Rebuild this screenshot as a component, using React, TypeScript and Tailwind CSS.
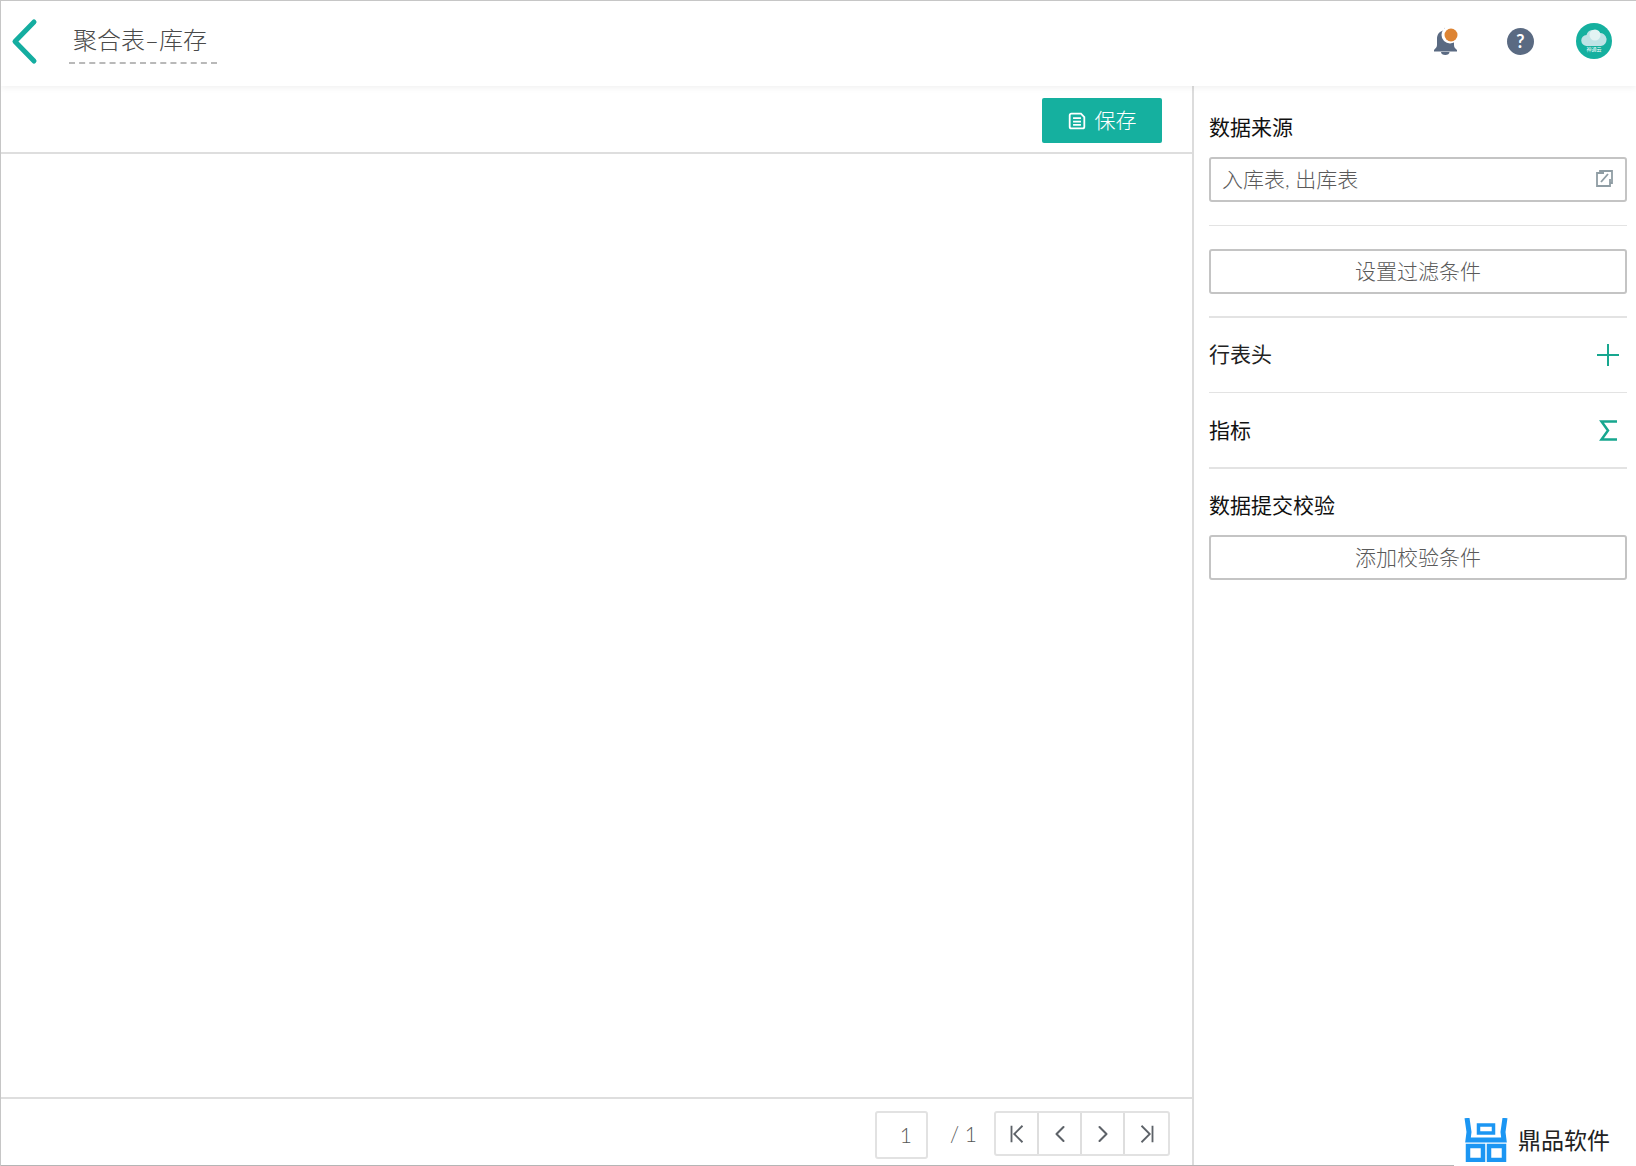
import { ChevronLeft, ChevronRight } from "lucide-react";

const font = "font-['Lato','Noto_Sans_CJK_SC',sans-serif]";

const Bell = () => (
  <svg viewBox="0 0 26 28" className="w-[26px] h-[28px]">
    <path d="M11 0.500 L12 3 C6.500 4 4 7 4 12 L4 18 C4 20 2.500 21.500 1 23 L1 24.500 L24 24.500 L24 23 C22 21.500 21 20 21 18 L21 14 L11 2z" fill="#5a6a82" />
    <path d="M8 25h8.500c0 1.800-1.800 3-4.200 3S8 26.800 8 25z" fill="#5a6a82" />
    <circle cx="17" cy="8" r="8.500" fill="white" />
    <circle cx="18" cy="8" r="6.500" fill="#dd8433" />
  </svg>
);

const Avatar = () => (
  <div className="w-[36px] h-[36px] rounded-full bg-[#15b09f] flex flex-col items-center pt-[5px]">
    <svg viewBox="0 0 26 18" className="w-[26px] h-[18px]">
      <path d="M6 18a5.500 5.500 0 0 1-.5-11A7 7 0 0 1 18 5a6.500 6.500 0 0 1 2 13z" fill="#bfe3e6" />
      <circle cx="14" cy="7" r="5.500" fill="#e2f3f3" />
    </svg>
    <span className="text-[5px] leading-[7px] text-white">神通云</span>
  </div>
);

const Logo = () => (
  <svg viewBox="0 0 44 44" className="w-[44px] h-[44px]" fill="none" stroke="#1b96f3">
    <path d="M3 0l2 14-1 8h36l-1-8 2-14" strokeWidth="5" />
    <rect x="14.500" y="7" width="15" height="8" strokeWidth="3.500" />
    <rect x="4" y="28" width="15" height="14" strokeWidth="4.500" />
    <rect x="25" y="28" width="15" height="14" strokeWidth="4.500" />
  </svg>
);

const PagerButton = ({ children, last }: { children: React.ReactNode; last?: boolean }) => (
  <button className={`w-[44px] h-full flex items-center justify-center text-[#5d6268] ${last ? "" : "border-r-2 border-[#dedede]"}`}>
    {children}
  </button>
);

export default function App() {
  return (
    <div className={`${font} w-[1636px] h-[1166px] relative bg-white border-t border-l border-[#c6c6c6] flex flex-col overflow-hidden`}>
      {/* header */}
      <header className="h-[85px] shrink-0 flex items-center shadow-[0_2px_6px_rgba(0,0,0,0.06)] z-10 bg-white">
        <svg viewBox="0 0 30 48" className="ml-[8px] w-[30px] h-[48px] -mt-[4px]" fill="none" stroke="#14ada0" strokeWidth="5" strokeLinecap="round" strokeLinejoin="round">
          <path d="M25 4L6 23.500 25 43" />
        </svg>
        <div className="ml-[30px] w-[148px] h-[44px] -mt-[4px] pl-[4px] pb-[2px] border-b-2 border-dashed border-[#b9b9b9] flex items-center text-[24px] font-light text-[#4a4a4a]">
          聚合表–库存
        </div>
        <div className="ml-auto flex items-center pb-[5px]">
          <Bell />
          <div className="ml-[48px] w-[27px] h-[27px] rounded-full bg-[#5a6a82] flex items-center justify-center text-white text-[18px] font-bold">?</div>
          <div className="ml-[42px] mr-[24px]"><Avatar /></div>
        </div>
      </header>

      <div className="flex-1 flex min-h-0">
        {/* main panel */}
        <main className="w-[1193px] flex flex-col border-r-2 border-[#dcdcdc]">
          <div className="h-[68px] shrink-0 flex items-start justify-end pt-[12px] pr-[30px] border-b-2 border-[#dedede]">
            <button className="w-[120px] h-[45px] rounded-[2px] bg-[#15b09f] text-white flex items-center justify-center gap-[9px] pb-[2px] text-[21px] font-light">
              <svg viewBox="0 0 16 16" className="w-[18px] h-[18px] mt-[2px]" fill="none" stroke="white" strokeWidth="1.600">
                <path d="M3 1.500h8.500l3 3V13a1.500 1.500 0 0 1-1.500 1.500H3A1.500 1.500 0 0 1 1.500 13V3A1.500 1.500 0 0 1 3 1.500z" />
                <path d="M4.500 5.500h7M4.500 8.500h7M4.500 11.500h7" />
              </svg>
              保存
            </button>
          </div>
          <div className="flex-1" />
          <div className="h-[68px] shrink-0 border-t-2 border-[#dedede] flex items-start justify-end pt-[12px] pr-[22px] text-[#555]">
            <div className="w-[53px] h-[48px] border-2 border-[#e2e2e2] rounded-[3px] flex items-center justify-end pr-[14px] text-[21px] font-light">1</div>
            <span className="mt-[7px] ml-[22px] mr-[17px] text-[21px] font-light">/ 1</span>
            <div className="w-[176px] h-[45px] border-2 border-[#e2e2e2] rounded-[3px] flex">
              <PagerButton>
                <svg viewBox="0 0 20 24" className="w-[20px] h-[22px]" fill="none" stroke="currentColor" strokeWidth="2"><path d="M4 3v18M16 3l-9 9 9 9" /></svg>
              </PagerButton>
              <PagerButton><ChevronLeft className="w-[28px] h-[28px]" strokeWidth={1.8} /></PagerButton>
              <PagerButton><ChevronRight className="w-[28px] h-[28px]" strokeWidth={1.8} /></PagerButton>
              <PagerButton last>
                <svg viewBox="0 0 20 24" className="w-[20px] h-[22px]" fill="none" stroke="currentColor" strokeWidth="2"><path d="M16 3v18M4 3l9 9-9 9" /></svg>
              </PagerButton>
            </div>
          </div>
        </main>

        {/* sidebar */}
        <aside className="flex-1 pl-[15px] pr-[9px] flex flex-col">
          <h3 className="mt-[26px] mb-px h-[30px] flex items-center text-[21px] text-[#111]">数据来源</h3>
          <div className="mt-[14px] h-[45px] border-2 border-[#c4c4c4] rounded-[3px] flex items-center justify-between pl-[11px] pr-[12px] pb-[2px] text-[21px] font-light text-[#5a5a5a]">
            入库表, 出库表
            <svg viewBox="0 0 18 18" className="w-[18px] h-[18px]" fill="none" stroke="#8f9da4" strokeWidth="1.800">
              <path d="M9 3H2v13h13V9" />
              <path d="M5 3V1h12v12h-2" />
              <path d="M6 12l7-8" />
            </svg>
          </div>
          <div className="mt-[23px] h-px bg-[#e3e3e3]" />
          <button className="mt-[23px] h-[45px] border-2 border-[#c4c4c4] rounded-[3px] pb-[2px] text-[21px] font-light text-[#5a5a5a]">设置过滤条件</button>
          <div className="mt-[22px] h-[2px] bg-[#e3e3e3]" />
          <div className="h-[75px] flex items-center justify-between border-b border-[#e3e3e3] text-[21px] text-[#222]">
            <span className="-mt-[2px]">行表头</span>
            <svg viewBox="0 0 22 22" className="mr-[8px] w-[22px] h-[22px]" fill="none" stroke="#17a78f" strokeWidth="2"><path d="M11 0v22M0 11h22" /></svg>
          </div>
          <div className="h-[76px] flex items-center justify-between border-b-2 border-[#e3e3e3] text-[21px] text-[#111]">
            <span>指标</span>
            <svg viewBox="0 0 18 21" className="mr-[10px] w-[18px] h-[21px]" fill="none" stroke="#17a78f" strokeWidth="2.500"><path d="M18 1.500H2.500L9 10.500 2.500 19.500H18" /></svg>
          </div>
          <h3 className="mt-[21px] h-[30px] flex items-center text-[21px] text-[#111]">数据提交校验</h3>
          <button className="mt-[15px] h-[45px] border-2 border-[#c4c4c4] rounded-[3px] pb-[2px] text-[21px] font-light text-[#5a5a5a]">添加校验条件</button>
        </aside>
      </div>

      {/* bottom line + watermark */}
      <div className="h-px shrink-0 bg-[#b5b5b5]" />
      <div className="absolute right-0 bottom-0 w-[182px] h-[52px] bg-white flex items-center pl-[10px] gap-[10px] text-[23px] text-[#222]">
        <Logo />
        鼎品软件
      </div>
    </div>
  );
}
